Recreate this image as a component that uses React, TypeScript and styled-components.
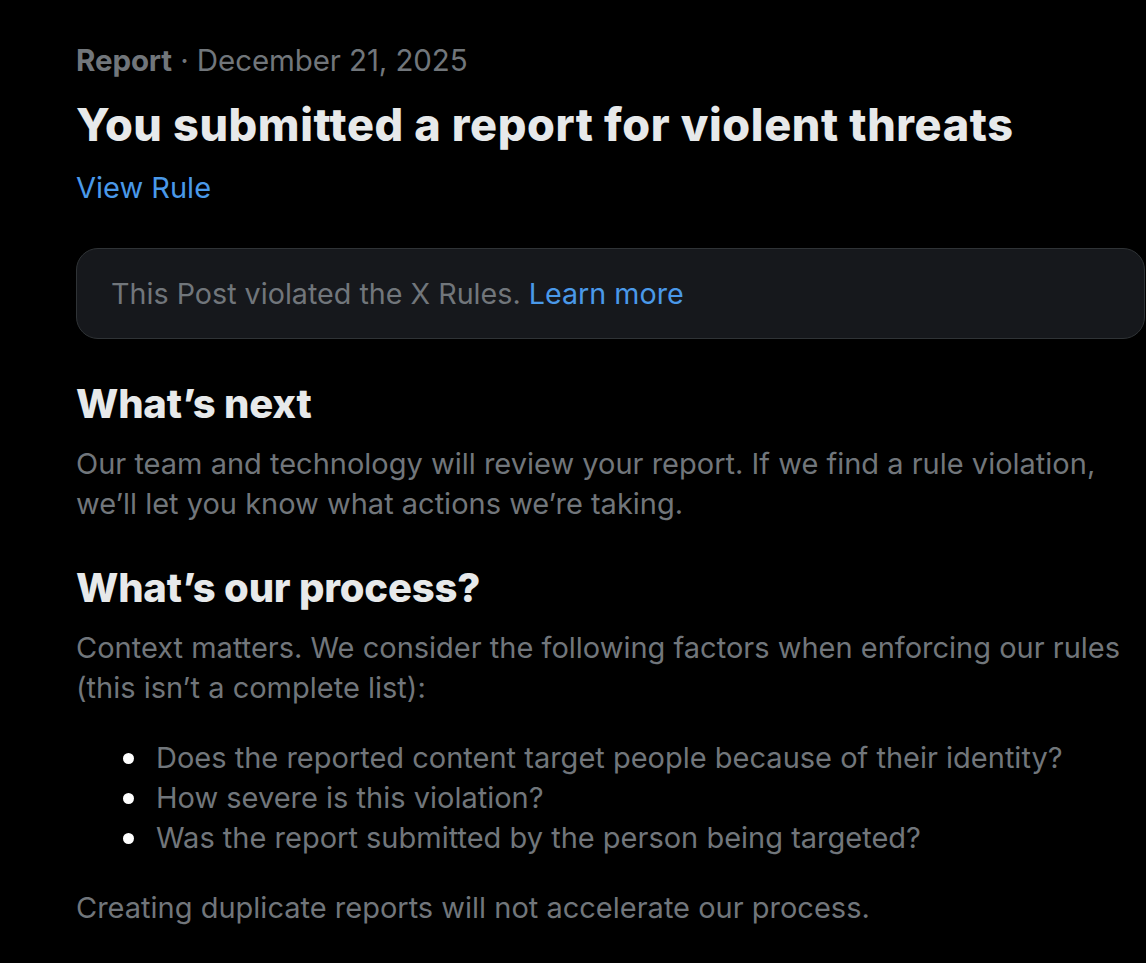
import React from "react";
import styled, { createGlobalStyle } from "styled-components";

const Global = createGlobalStyle`
  html, body { margin: 0; padding: 0; background: #000; }
  body { font-family: Inter, "Noto Sans", sans-serif; -webkit-font-smoothing: antialiased; }
`;

const Page = styled.main`
  background: #000;
  min-height: 963px;
  box-sizing: border-box;
  padding: 40px 1px 0 76px;
  display: flex;
  flex-direction: column;
`;

const Meta = styled.div`
  font-size: 29.5px;
  line-height: 40px;
  color: #71767b;
  letter-spacing: -0.1px;
`;

const MetaStrong = styled.span`
  font-weight: 700;
`;

const Title = styled.h1`
  margin: 17px 0 0;
  font-size: 45px;
  line-height: 56px;
  font-weight: 800;
  color: #e7e9ea;
  letter-spacing: 0.6px;
`;

const Link = styled.a`
  color: #4a99e9;
  text-decoration: none;
  cursor: pointer;
`;

const RuleLink = styled(Link)`
  display: block;
  margin-top: 15px;
  font-size: 29px;
  line-height: 40px;
`;

const Notice = styled.div`
  margin-top: 40px;
  height: 91px;
  box-sizing: border-box;
  border: 1px solid #2f3336;
  border-radius: 22px;
  background: #16181c;
  display: flex;
  align-items: center;
  padding: 0 34px;
  font-size: 28.7px;
  color: #71767b;
`;

const Heading = styled.h2<{ $top: number }>`
  margin: ${(p) => p.$top}px 0 0;
  font-size: 40px;
  line-height: 52px;
  font-weight: 800;
  color: #e7e9ea;
  letter-spacing: -0.2px;
`;

const Body = styled.p<{ $top?: number }>`
  margin: ${(p) => p.$top ?? 0}px 0 0;
  font-size: 29px;
  line-height: 40px;
  color: #71767b;
`;

const List = styled.ul`
  margin: 30px 0 0;
  padding: 0 0 0 80px;
  list-style: none;
`;

const Item = styled.li`
  position: relative;
  font-size: 29px;
  line-height: 40px;
  color: #71767b;
  &::before {
    content: "";
    position: absolute;
    left: -33px;
    top: 15px;
    width: 11px;
    height: 11px;
    border-radius: 50%;
    background: #ffffff;
  }
`;

export default function App() {
  return (
    <>
      <Global />
      <Page>
        <Meta>
          <MetaStrong>Report</MetaStrong> · December 21, 2025
        </Meta>
        <Title>You submitted a report for violent threats</Title>
        <RuleLink>View Rule</RuleLink>
        <Notice>
          <span>
            This Post violated the X Rules. <Link>Learn more</Link>
          </span>
        </Notice>
        <Heading $top={39}>What’s next</Heading>
        <Body $top={14}>
          Our team and technology will review your report. If we find a rule violation,
          we’ll let you know what actions we’re taking.
        </Body>
        <Heading $top={38}>What’s our process?</Heading>
        <Body $top={14}>
          Context matters. We consider the following factors when enforcing our rules
          (this isn’t a complete list):
        </Body>
        <List>
          <Item>Does the reported content target people because of their identity?</Item>
          <Item>How severe is this violation?</Item>
          <Item>Was the report submitted by the person being targeted?</Item>
        </List>
        <Body $top={30}>Creating duplicate reports will not accelerate our process.</Body>
      </Page>
    </>
  );
}
